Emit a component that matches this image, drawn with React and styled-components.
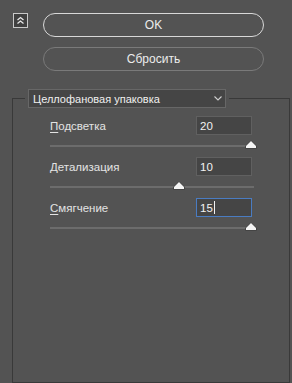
import React from 'react'
import styled, { createGlobalStyle } from 'styled-components'

const GlobalStyle = createGlobalStyle`
  html, body {
    margin: 0;
    padding: 0;
    background: #535353;
  }
  body {
    font-family: "Liberation Sans", Arial, sans-serif;
    font-size: 12px;
    color: #e6e6e6;
  }
`

const Page = styled.div`
  display: flex;
  flex-direction: column;
  height: 383px;
  width: 292px;
  box-sizing: border-box;
  padding-top: 13px;
`

const Header = styled.div`
  display: flex;
  align-items: flex-start;
  padding-left: 13px;
`

const CollapseBox = styled.div`
  width: 13px;
  height: 13px;
  border: 1px solid #c9c9c9;
  background: #404040;
  display: flex;
  align-items: center;
  justify-content: center;
`

const Buttons = styled.div`
  display: flex;
  flex-direction: column;
  gap: 10px;
  margin-left: 15px;
  width: 221px;
`

const PillButton = styled.button`
  height: 24px;
  box-sizing: border-box;
  border-radius: 12px;
  border: 1.5px solid ${p => (p.$primary ? '#d8d8d8' : '#7a7a7a')};
  background: transparent;
  color: #ececec;
  font-family: inherit;
  font-size: 12px;
  padding: 0;
  line-height: 20px;
`

const Group = styled.fieldset`
  flex: 1;
  margin: 18px 2px 0 12px;
  min-width: 0;
  border: 1px solid #393939;
  padding: 8px 35px 0 37px;
  display: flex;
  flex-direction: column;
`

const Legend = styled.legend`
  padding: 0 3px;
  margin-left: -25px;
`

const Select = styled.div`
  width: 198px;
  height: 19px;
  box-sizing: border-box;
  background: #454545;
  border: 1px solid #676767;
  display: flex;
  align-items: center;
  justify-content: space-between;
  padding: 0 3px 0 4px;
  color: #f0f0f0;
  font-size: 11px;
`

const Param = styled.div`
  display: flex;
  flex-direction: column;
  height: 41px;
`

const ParamTop = styled.div`
  display: flex;
  align-items: center;
  justify-content: space-between;
  height: 19px;
`

const Label = styled.span`
  color: #e3e3e3;
  font-size: 11.5px;
  u {
    text-decoration: underline;
    text-underline-offset: 2px;
  }
`

const NumberField = styled.div`
  width: 56px;
  height: 19px;
  box-sizing: border-box;
  margin-right: 2px;
  background: #454545;
  border: 1px solid ${p => (p.$focused ? '#4a7cc2' : '#606060')};
  display: flex;
  align-items: center;
  padding-left: 3px;
  color: #f2f2f2;
  font-size: 11.5px;
`

const Caret = styled.span`
  display: inline-block;
  width: 1px;
  height: 13px;
  background: #f2f2f2;
  margin-left: 1px;
`

const Track = styled.div`
  position: relative;
  margin-top: 10px;
  height: 2px;
  background: #6c6c6c;
`

const Thumb = styled.svg`
  position: absolute;
  top: -5px;
  margin-left: -6px;
`

const params = [
  { label: 'Подсветка', value: 20, min: 0, max: 20 },
  { label: 'Детализация', value: 10, min: 1, max: 15 },
  { label: 'Смягчение', value: 15, min: 1, max: 15, focused: true },
]

function Slider({ value, min, max }) {
  const pct = (value - min) / (max - min)
  return (
    <Track>
      <Thumb width="12" height="9" viewBox="0 0 12 9" style={{ left: `${pct * 201}px` }}>
        <path d="M6 0.5 L11.5 6 L11.5 8.5 L0.5 8.5 L0.5 6 Z" fill="#f4f4f4" stroke="#2c2c2c" strokeWidth="0.8" strokeLinejoin="round" />
      </Thumb>
    </Track>
  )
}

export default function App() {
  return (
    <Page>
      <GlobalStyle />
      <Header>
        <CollapseBox>
          <svg width="9" height="9" viewBox="0 0 9 9">
            <path d="M1.5 4 L4.5 1.5 L7.5 4 M1.5 7.5 L4.5 5 L7.5 7.5" fill="none" stroke="#e8e8e8" strokeWidth="1.3" />
          </svg>
        </CollapseBox>
        <Buttons>
          <PillButton $primary>OK</PillButton>
          <PillButton>Сбросить</PillButton>
        </Buttons>
      </Header>

      <Group>
        <Legend>
          <Select>
            <span>Целлофановая упаковка</span>
            <svg width="8" height="5" viewBox="0 0 8 5">
              <path d="M0.5 0.5 L4 4 L7.5 0.5" fill="none" stroke="#cfcfcf" strokeWidth="1.1" />
            </svg>
          </Select>
        </Legend>

        {params.map(p => (
          <Param key={p.label}>
            <ParamTop>
              <Label>
                <u>{p.label[0]}</u>
                {p.label.slice(1)}
              </Label>
              <NumberField $focused={p.focused}>
                {p.value}
                {p.focused && <Caret />}
              </NumberField>
            </ParamTop>
            <Slider value={p.value} min={p.min} max={p.max} />
          </Param>
        ))}
      </Group>
    </Page>
  )
}
